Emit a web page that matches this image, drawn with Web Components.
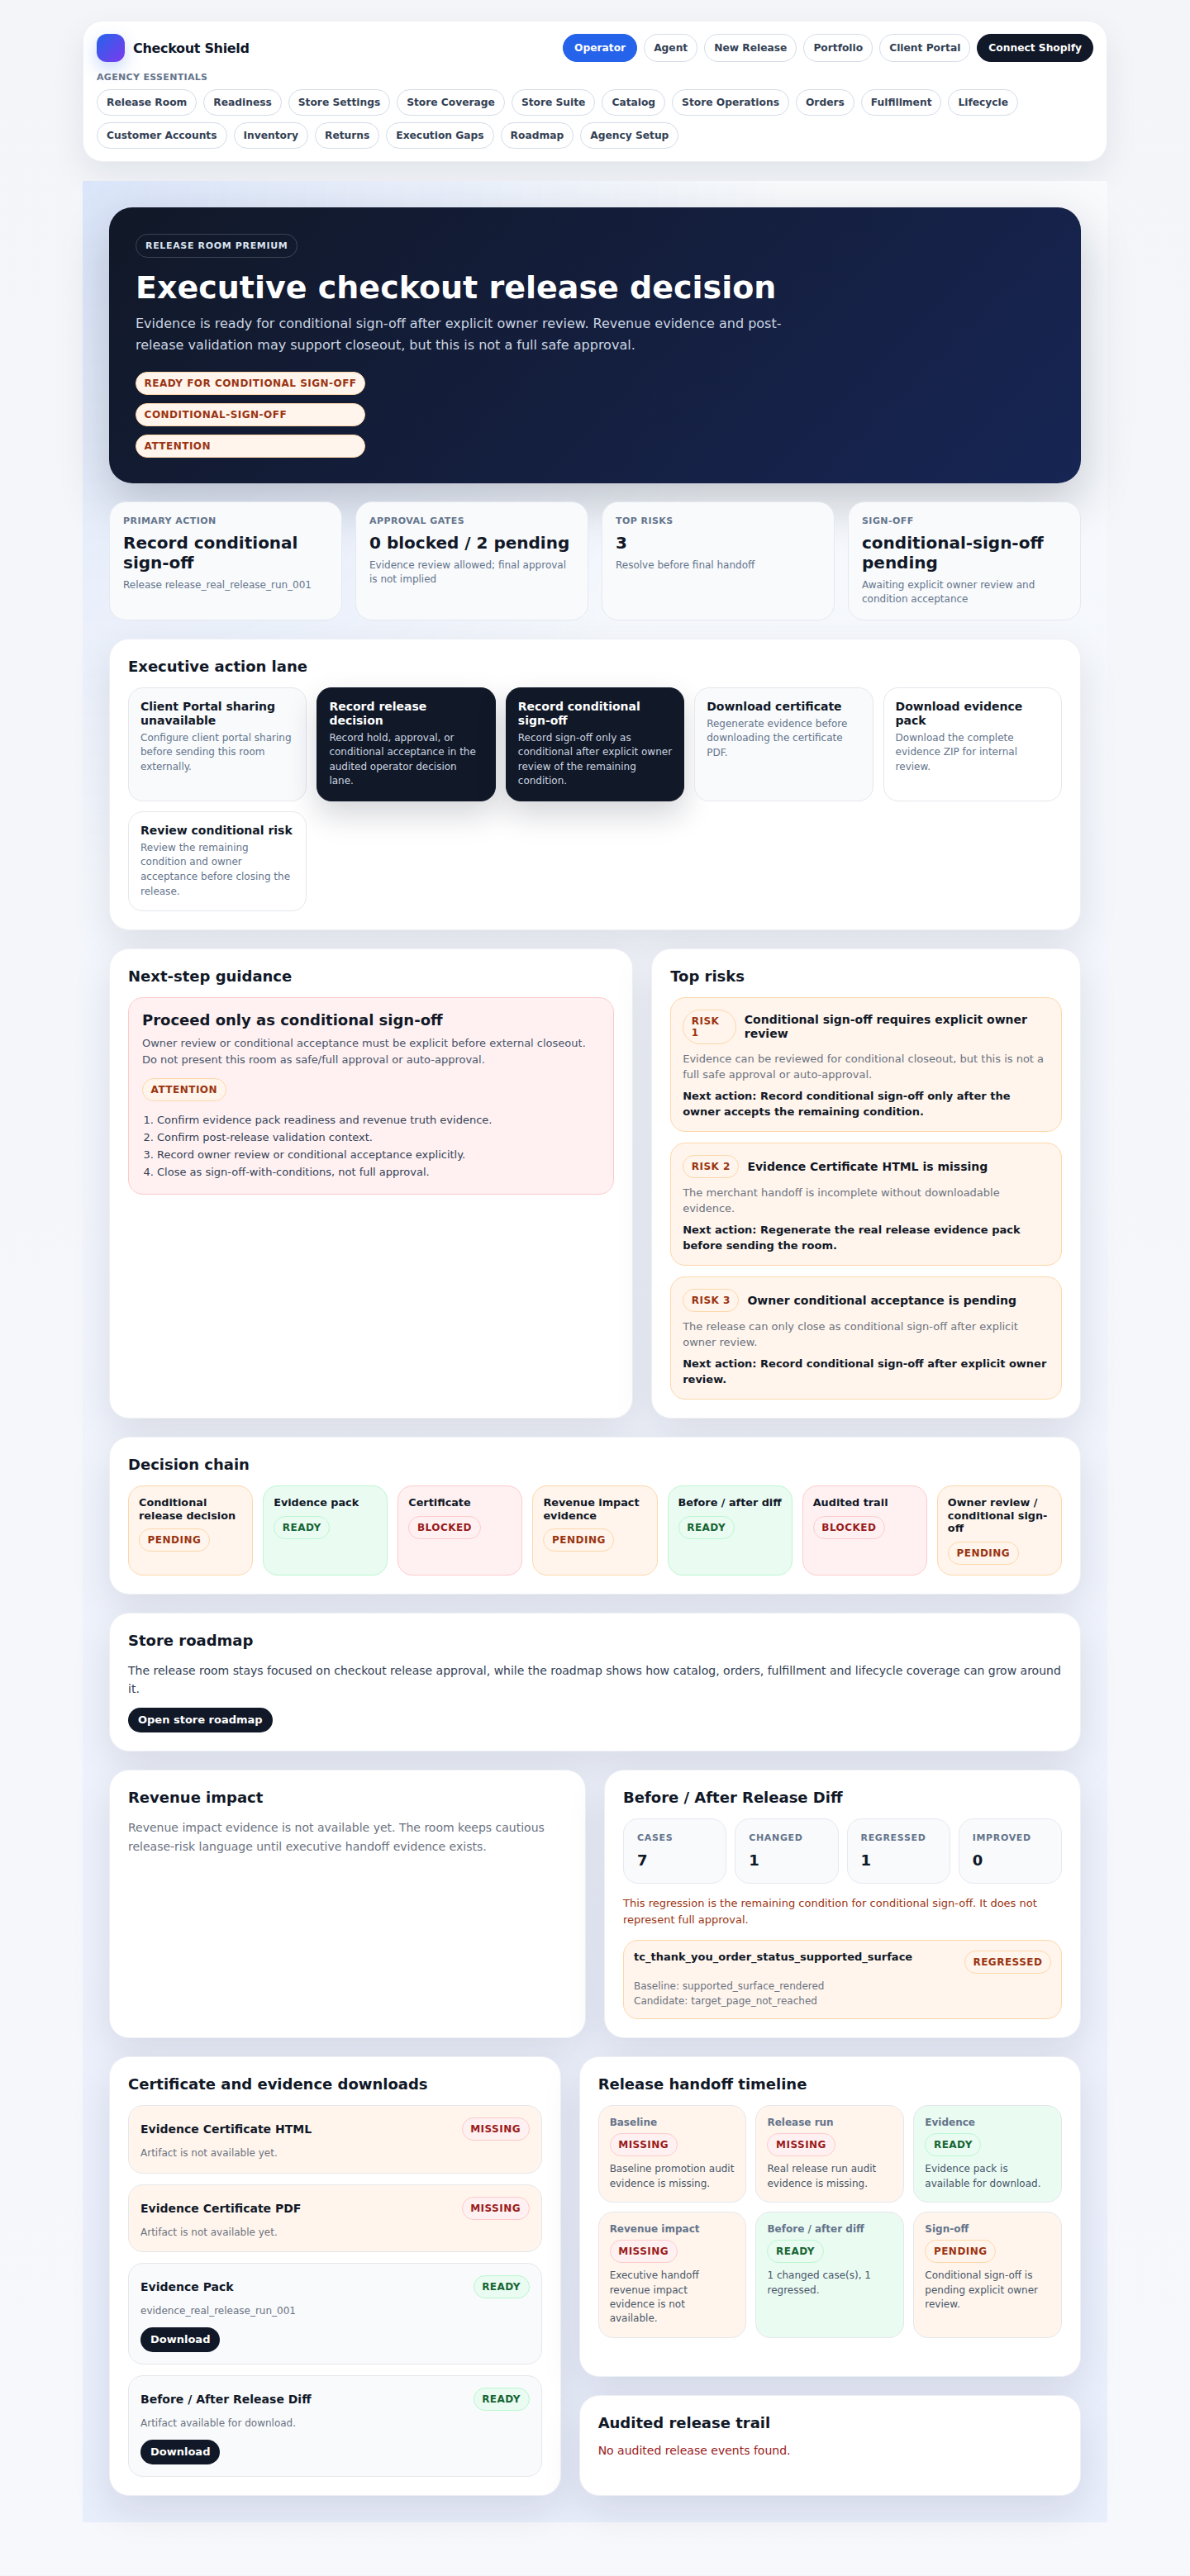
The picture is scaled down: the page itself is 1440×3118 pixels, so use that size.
<!DOCTYPE html>
<html lang="en">
<head>
<meta charset="utf-8">
<title>Checkout Shield</title>
<style>
  html, body { margin: 0; }
  body {
    background: linear-gradient(180deg, #f3f5f9 0%, #f6f8fc 100%);
    font-family: "DejaVu Sans", sans-serif;
    color: #111827;
  }
</style>
</head>
<body>
<app-page></app-page>

<script>
// shared bits of css for the elements that hold text
const baseCss = `
  * { box-sizing: border-box; }
  h1, h2, h3, p, ol { margin: 0; }
`;

const toneColors = {
  ready: { bg: "#eafbf2", line: "#bbf7d0", ink: "#166534" },
  blocked: { bg: "#fff1f2", line: "#fecaca", ink: "#991b1b" },
  missing: { bg: "#fff1f2", line: "#fecaca", ink: "#991b1b" },
  pending: { bg: "#fff5ec", line: "#fed7aa", ink: "#9a3412" },
};

function define(name, css, html) {
  customElements.define(
    name,
    class extends HTMLElement {
      constructor() {
        super();
        this.attachShadow({ mode: "open" });
        this.shadowRoot.innerHTML = `<style>${baseCss}${css}</style>${html}`;
      }
    }
  );
}

// status pill, the tone attribute picks the colours
class StatusBadge extends HTMLElement {
  constructor() {
    super();
    this.attachShadow({ mode: "open" });
  }

  connectedCallback() {
    const tone = toneColors[this.getAttribute("tone")] || toneColors.pending;
    this.shadowRoot.innerHTML = `
      <style>
        :host {
          display: block;
          width: fit-content;
          padding: 6px 9.6px;
          border-radius: 999px;
          border: 1px solid ${tone.line};
          background: ${tone.bg};
          color: ${tone.ink};
          font-size: 12px;
          line-height: 14px;
          font-weight: 700;
          letter-spacing: 0.04em;
          text-transform: uppercase;
        }
      </style>
      <slot></slot>
    `;
  }
}
customElements.define("status-badge", StatusBadge);

define("nav-pill", `
  :host { display: block; }
  a {
    display: block;
    padding: 0 11px;
    height: 32px;
    line-height: 30px;
    border: 1px solid #d5dce8;
    border-radius: 999px;
    background: #fff;
    color: #334155;
    font-size: 12.24px;
    font-weight: 700;
    white-space: nowrap;
  }
  :host([top]) a { height: 34px; line-height: 32px; }
  :host([active]) a { padding: 0 13px; background: #2563eb; border-color: #2563eb; color: #fff; }
  :host([dark]) a { padding: 0 13px; background: #111827; border-color: #111827; color: #fff; }
`, `<a><slot></slot></a>`);

define("top-nav", `
  :host {
    display: block;
    padding: 15px 16px;
    background: #fff;
    border: 1px solid #eef0f5;
    border-radius: 24px;
    box-shadow: 0 16px 40px rgba(15, 23, 42, 0.08);
  }
  .top { display: flex; justify-content: space-between; align-items: center; }
  .brand { display: flex; align-items: center; gap: 10px; font-size: 16px; font-weight: 700; letter-spacing: -0.02em; color: #0f172a; }
  .logo {
    width: 34px; height: 34px; border-radius: 12px;
    background: linear-gradient(135deg, #2563eb, #7c3aed);
    box-shadow: 0 8px 20px rgba(37, 99, 235, 0.25);
  }
  .links { display: flex; gap: 8px; }
  .label {
    margin-top: 12px; margin-bottom: 7px;
    font-size: 11px; line-height: 14px; font-weight: 700;
    letter-spacing: 0.03em; color: #64748b; text-transform: uppercase;
  }
  .essentials { display: flex; flex-wrap: wrap; gap: 8px; }
`, `
  <div class="top">
    <div class="brand"><span class="logo"></span>Checkout Shield</div>
    <div class="links">
      <nav-pill top active>Operator</nav-pill>
      <nav-pill top>Agent</nav-pill>
      <nav-pill top>New Release</nav-pill>
      <nav-pill top>Portfolio</nav-pill>
      <nav-pill top>Client Portal</nav-pill>
      <nav-pill top dark>Connect Shopify</nav-pill>
    </div>
  </div>
  <div class="label">Agency essentials</div>
  <div class="essentials">
    <nav-pill>Release Room</nav-pill>
    <nav-pill>Readiness</nav-pill>
    <nav-pill>Store Settings</nav-pill>
    <nav-pill>Store Coverage</nav-pill>
    <nav-pill>Store Suite</nav-pill>
    <nav-pill>Catalog</nav-pill>
    <nav-pill>Store Operations</nav-pill>
    <nav-pill>Orders</nav-pill>
    <nav-pill>Fulfillment</nav-pill>
    <nav-pill>Lifecycle</nav-pill>
    <nav-pill>Customer Accounts</nav-pill>
    <nav-pill>Inventory</nav-pill>
    <nav-pill>Returns</nav-pill>
    <nav-pill>Execution Gaps</nav-pill>
    <nav-pill>Roadmap</nav-pill>
    <nav-pill>Agency Setup</nav-pill>
  </div>
`);

define("hero-banner", `
  :host {
    display: block;
    padding: 32px 32px 31px;
    border-radius: 28px;
    background: linear-gradient(135deg, #111827 0%, #172554 100%);
    box-shadow: 0 24px 60px rgba(15, 23, 42, 0.22);
    color: #fff;
  }
  .tag {
    display: block;
    width: fit-content;
    padding: 7px 11px;
    height: 29px;
    border: 1px solid rgba(255, 255, 255, 0.18);
    border-radius: 999px;
    font-size: 11px; line-height: 14px; font-weight: 700;
    letter-spacing: 0.06em;
    color: #dbe4f0;
    text-transform: uppercase;
  }
  h1 { margin-top: 14px; font-size: 38px; line-height: 44px; font-weight: 700; }
  p { margin-top: 9px; max-width: 820px; font-size: 16px; line-height: 26px; color: #cbd5e1; }
  .chips { display: flex; flex-direction: column; width: fit-content; gap: 10px; margin-top: 19px; }
  .chip {
    height: 28px; padding: 0 9.6px;
    border: 1px solid #fed7aa; border-radius: 999px;
    background: #fff5ec; color: #9a3412;
    font-size: 12px; line-height: 26px; font-weight: 700; letter-spacing: 0.04em;
    text-transform: uppercase;
  }
`, `
  <span class="tag">Release room premium</span>
  <h1>Executive checkout release decision</h1>
  <p>Evidence is ready for conditional sign-off after explicit owner review. Revenue evidence and post-release validation may support closeout, but this is not a full safe approval.</p>
  <div class="chips">
    <div class="chip">Ready for conditional sign-off</div>
    <div class="chip">conditional-sign-off</div>
    <div class="chip">Attention</div>
  </div>
`);

class StatCard extends HTMLElement {
  constructor() {
    super();
    this.attachShadow({ mode: "open" });
  }
  connectedCallback() {
    this.shadowRoot.innerHTML = `
      <style>
        ${baseCss}
        :host {
          display: block;
          padding: 16px;
          border: 1px solid #e5e9f0;
          border-radius: 20px;
          background: #f8fafc;
        }
        .label { font-size: 11px; line-height: 14px; font-weight: 700; letter-spacing: 0.04em; color: #64748b; text-transform: uppercase; }
        .value { margin-top: 7px; font-size: 20px; line-height: 24px; font-weight: 700; color: #111827; }
        .note { margin-top: 7px; font-size: 12px; line-height: 17px; color: #64748b; }
      </style>
      <div class="label">${this.getAttribute("label")}</div>
      <div class="value">${this.getAttribute("value")}</div>
      <div class="note">${this.getAttribute("note")}</div>
    `;
  }
}
customElements.define("stat-card", StatCard);

define("panel-card", `
  :host {
    display: block;
    padding: 22px;
    border-radius: 24px;
    background: #fff;
    border: 1px solid #eef0f5;
    box-shadow: 0 18px 48px rgba(15, 23, 42, 0.1);
  }
  h2 { font-size: 18px; line-height: 21.6px; margin-bottom: 14.4px; font-weight: 700; color: #111827; }
`, `<h2><slot name="title"></slot></h2><slot></slot>`);

class ActionCard extends HTMLElement {
  constructor() {
    super();
    this.attachShadow({ mode: "open" });
  }
  connectedCallback() {
    const dark = this.hasAttribute("dark");
    const bg = dark ? "#111827" : this.hasAttribute("muted") ? "#f8fafc" : "#fff";
    this.shadowRoot.innerHTML = `
      <style>
        ${baseCss}
        :host {
          display: block;
          padding: 14px;
          border-radius: 18px;
          border: 1px solid ${dark ? "#111827" : "#e5e7eb"};
          background: ${bg};
          ${dark ? "box-shadow: 0 16px 36px rgba(15, 23, 42, 0.18);" : ""}
        }
        h3 { font-size: 14px; line-height: 16.8px; font-weight: 700; color: ${dark ? "#fff" : "#111827"}; }
        p { margin-top: 4px; font-size: 12px; line-height: 17.6px; color: ${dark ? "#cbd5e1" : "#64748b"}; }
      </style>
      <h3>${this.getAttribute("title")}</h3>
      <p><slot></slot></p>
    `;
  }
}
customElements.define("action-card", ActionCard);

define("action-lane", `
  :host { display: grid; grid-template-columns: repeat(5, 1fr); gap: 12px; }
`, `<slot></slot>`);

define("guidance-box", `
  :host {
    display: block;
    padding: 16px;
    border: 1px solid #fecaca;
    border-radius: 18px;
    background: #fff1f2;
  }
  h3 { font-size: 18px; line-height: 22px; font-weight: 700; color: #111827; }
  p { margin-top: 7px; font-size: 13px; line-height: 20px; color: #475569; }
  status-badge { margin-top: 12px; }
  ol { margin-top: 13px; padding-left: 18px; font-size: 13px; line-height: 20.8px; color: #334155; }
`, `
  <h3>Proceed only as conditional sign-off</h3>
  <p>Owner review or conditional acceptance must be explicit before external closeout. Do not present this room as safe/full approval or auto-approval.</p>
  <status-badge tone="pending">Attention</status-badge>
  <ol>
    <li>Confirm evidence pack readiness and revenue truth evidence.</li>
    <li>Confirm post-release validation context.</li>
    <li>Record owner review or conditional acceptance explicitly.</li>
    <li>Close as sign-off-with-conditions, not full approval.</li>
  </ol>
`);

class RiskCard extends HTMLElement {
  constructor() {
    super();
    this.attachShadow({ mode: "open" });
  }
  connectedCallback() {
    this.shadowRoot.innerHTML = `
      <style>
        ${baseCss}
        :host {
          display: block;
          padding: 14px;
          border: 1px solid #fed7aa;
          border-radius: 18px;
          background: #fff5ec;
        }
        .head { display: flex; align-items: center; gap: 10px; }
        h3 { font-size: 14px; line-height: 16.8px; font-weight: 700; color: #111827; }
        p { margin-top: 8px; font-size: 13px; line-height: 19px; color: #6b7280; }
        p.next { margin-top: 7px; font-weight: 700; color: #111827; }
      </style>
      <div class="head">
        <status-badge tone="pending">${this.getAttribute("risk")}</status-badge>
        <h3>${this.getAttribute("title")}</h3>
      </div>
      <p>${this.getAttribute("body")}</p>
      <p class="next">Next action: ${this.getAttribute("next")}</p>
    `;
  }
}
customElements.define("risk-card", RiskCard);

class ChainStep extends HTMLElement {
  constructor() {
    super();
    this.attachShadow({ mode: "open" });
  }
  connectedCallback() {
    const key = this.getAttribute("tone");
    const tone = toneColors[key];
    this.shadowRoot.innerHTML = `
      <style>
        ${baseCss}
        :host {
          display: block;
          padding: 12px;
          border: 1px solid ${tone.line};
          border-radius: 18px;
          background: ${tone.bg};
        }
        .name { font-size: 12.8px; line-height: 15.6px; font-weight: 700; color: #111827; margin-bottom: 8px; }
      </style>
      <div class="name">${this.getAttribute("name")}</div>
      <status-badge tone="${key}">${key}</status-badge>
    `;
  }
}
customElements.define("chain-step", ChainStep);

define("dark-button", `
  :host {
    display: block;
    width: fit-content;
    padding: 0 12px;
    height: 30.5px;
    line-height: 30.5px;
    border-radius: 999px;
    background: #111827;
    color: #fff;
    font-size: 13px;
    font-weight: 700;
  }
`, `<slot></slot>`);

class DiffStat extends HTMLElement {
  constructor() {
    super();
    this.attachShadow({ mode: "open" });
  }
  connectedCallback() {
    this.shadowRoot.innerHTML = `
      <style>
        ${baseCss}
        :host {
          display: block;
          height: 79px;
          padding: 16px;
          border: 1px solid #e5e9f0;
          border-radius: 18px;
          background: #f8fafc;
        }
        .label { font-size: 11px; line-height: 14px; font-weight: 700; color: #64748b; letter-spacing: 0.06em; text-transform: uppercase; }
        .value { margin-top: 8px; font-size: 18px; line-height: 24px; font-weight: 700; color: #111827; }
      </style>
      <div class="label">${this.getAttribute("label")}</div>
      <div class="value">${this.getAttribute("value")}</div>
    `;
  }
}
customElements.define("diff-stat", DiffStat);

class DownloadCard extends HTMLElement {
  constructor() {
    super();
    this.attachShadow({ mode: "open" });
  }
  connectedCallback() {
    const tone = this.getAttribute("tone");
    const ready = tone === "ready";
    this.shadowRoot.innerHTML = `
      <style>
        ${baseCss}
        :host {
          display: block;
          padding: 14px;
          border: 1px solid #e5e7eb;
          border-radius: 18px;
          background: ${ready ? "#f8fafc" : "#fff5ec"};
        }
        .head { display: flex; justify-content: space-between; align-items: center; }
        h3 { font-size: 14px; font-weight: 700; color: #111827; }
        p { margin-top: 6px; font-size: 12px; line-height: 18.5px; color: #6b7280; }
        dark-button { margin-top: 10px; }
      </style>
      <div class="head">
        <h3>${this.getAttribute("title")}</h3>
        <status-badge tone="${tone}">${tone}</status-badge>
      </div>
      <p>${this.getAttribute("note")}</p>
      ${ready ? "<dark-button>Download</dark-button>" : ""}
    `;
  }
}
customElements.define("download-card", DownloadCard);

class TimelineStep extends HTMLElement {
  constructor() {
    super();
    this.attachShadow({ mode: "open" });
  }
  connectedCallback() {
    const tone = this.getAttribute("tone");
    const bg = tone === "ready" ? "#eafbf2" : "#fff5ec";
    this.shadowRoot.innerHTML = `
      <style>
        ${baseCss}
        :host {
          display: block;
          padding: 13px;
          border: 1px solid #e5e7eb;
          border-radius: 18px;
          background: ${bg};
        }
        .name { font-size: 12px; line-height: 14px; font-weight: 700; color: #64748b; margin-bottom: 6px; }
        p { margin-top: 7px; font-size: 12px; line-height: 17.4px; color: #475569; }
      </style>
      <div class="name">${this.getAttribute("name")}</div>
      <status-badge tone="${tone}">${tone}</status-badge>
      <p><slot></slot></p>
    `;
  }
}
customElements.define("timeline-step", TimelineStep);

define("app-page", `
  :host { display: block; width: 1240px; margin: 0 auto; padding: 25px 0 64px; }
  .shell {
    margin-top: 23px;
    padding: 32px;
    display: flex; flex-direction: column; gap: 22px;
    background:
      radial-gradient(circle 850px at top left, rgba(37, 99, 235, 0.14), rgba(37, 99, 235, 0) 100%),
      linear-gradient(180deg, #f8fafc 0%, #e9eefc 100%);
  }
  .four { display: grid; grid-template-columns: repeat(4, 1fr); gap: 16px; }
  .split { display: grid; gap: 22px; }
  .guidance { grid-template-columns: 1.22fr 1fr; }
  .even { grid-template-columns: 1fr 1fr; }
  .handoff { grid-template-columns: 0.9fr 1fr; }
  .stack { display: grid; gap: 13px; }
  .chain { display: grid; grid-template-columns: repeat(7, 1fr); gap: 12px; }
  .copy { font-size: 14px; line-height: 22.4px; color: #334155; }
  .muted { font-size: 14px; line-height: 22.4px; color: #6b7280; }
  .copy + dark-button { margin-top: 11px; }
  .stats { display: grid; grid-template-columns: repeat(4, 1fr); gap: 10px; }
  .warn { margin-top: 14px; font-size: 13px; line-height: 20px; color: #9a3412; }
  .case {
    margin-top: 14px;
    padding: 12px;
    border: 1px solid #fed7aa;
    border-radius: 18px;
    background: #fff5ec;
  }
  .case .head { display: flex; justify-content: space-between; align-items: flex-start; }
  .case b { font-size: 13px; line-height: 15px; color: #111827; }
  .case p { margin: 6px 0 0; font-size: 12px; line-height: 18px; color: #6b7280; }
  .right { display: grid; gap: 22px; }
  .timeline { display: grid; grid-template-columns: repeat(3, 1fr); gap: 11.2px; }
  .none { font-size: 14px; color: #991b1b; }
`, `
  <top-nav></top-nav>
  <main class="shell">
    <hero-banner></hero-banner>
    <div class="four">
      <stat-card label="Primary action" value="Record conditional sign-off" note="Release release_real_release_run_001"></stat-card>
      <stat-card label="Approval gates" value="0 blocked / 2 pending" note="Evidence review allowed; final approval is not implied"></stat-card>
      <stat-card label="Top risks" value="3" note="Resolve before final handoff"></stat-card>
      <stat-card label="Sign-off" value="conditional-sign-off pending" note="Awaiting explicit owner review and condition acceptance"></stat-card>
    </div>
    <panel-card>
      <span slot="title">Executive action lane</span>
      <action-lane>
        <action-card muted title="Client Portal sharing unavailable">Configure client portal sharing before sending this room externally.</action-card>
        <action-card dark title="Record release decision">Record hold, approval, or conditional acceptance in the audited operator decision lane.</action-card>
        <action-card dark title="Record conditional sign-off">Record sign-off only as conditional after explicit owner review of the remaining condition.</action-card>
        <action-card muted title="Download certificate">Regenerate evidence before downloading the certificate PDF.</action-card>
        <action-card title="Download evidence pack">Download the complete evidence ZIP for internal review.</action-card>
        <action-card title="Review conditional risk">Review the remaining condition and owner acceptance before closing the release.</action-card>
      </action-lane>
    </panel-card>
    <div class="split guidance">
      <panel-card>
        <span slot="title">Next-step guidance</span>
        <guidance-box></guidance-box>
      </panel-card>
      <panel-card>
        <span slot="title">Top risks</span>
        <div class="stack">
          <risk-card risk="Risk 1" title="Conditional sign-off requires explicit owner review" body="Evidence can be reviewed for conditional closeout, but this is not a full safe approval or auto-approval." next="Record conditional sign-off only after the owner accepts the remaining condition."></risk-card>
          <risk-card risk="Risk 2" title="Evidence Certificate HTML is missing" body="The merchant handoff is incomplete without downloadable evidence." next="Regenerate the real release evidence pack before sending the room."></risk-card>
          <risk-card risk="Risk 3" title="Owner conditional acceptance is pending" body="The release can only close as conditional sign-off after explicit owner review." next="Record conditional sign-off after explicit owner review."></risk-card>
        </div>
      </panel-card>
    </div>
    <panel-card>
      <span slot="title">Decision chain</span>
      <div class="chain">
        <chain-step tone="pending" name="Conditional release decision"></chain-step>
        <chain-step tone="ready" name="Evidence pack"></chain-step>
        <chain-step tone="blocked" name="Certificate"></chain-step>
        <chain-step tone="pending" name="Revenue impact evidence"></chain-step>
        <chain-step tone="ready" name="Before / after diff"></chain-step>
        <chain-step tone="blocked" name="Audited trail"></chain-step>
        <chain-step tone="pending" name="Owner review / conditional sign-off"></chain-step>
      </div>
    </panel-card>
    <panel-card>
      <span slot="title">Store roadmap</span>
      <div class="copy">The release room stays focused on checkout release approval, while the roadmap shows how catalog, orders, fulfillment and lifecycle coverage can grow around it.</div>
      <dark-button>Open store roadmap</dark-button>
    </panel-card>
    <div class="split even">
      <panel-card>
        <span slot="title">Revenue impact</span>
        <div class="muted">Revenue impact evidence is not available yet. The room keeps cautious release-risk language until executive handoff evidence exists.</div>
      </panel-card>
      <panel-card>
        <span slot="title">Before / After Release Diff</span>
        <div class="stats">
          <diff-stat label="Cases" value="7"></diff-stat>
          <diff-stat label="Changed" value="1"></diff-stat>
          <diff-stat label="Regressed" value="1"></diff-stat>
          <diff-stat label="Improved" value="0"></diff-stat>
        </div>
        <div class="warn">This regression is the remaining condition for conditional sign-off. It does not represent full approval.</div>
        <div class="case">
          <div class="head">
            <b>tc_thank_you_order_status_supported_surface</b>
            <status-badge tone="pending">Regressed</status-badge>
          </div>
          <p>Baseline: supported_surface_rendered<br>Candidate: target_page_not_reached</p>
        </div>
      </panel-card>
    </div>
    <div class="split handoff">
      <panel-card>
        <span slot="title">Certificate and evidence downloads</span>
        <div class="stack">
          <download-card tone="missing" title="Evidence Certificate HTML" note="Artifact is not available yet."></download-card>
          <download-card tone="missing" title="Evidence Certificate PDF" note="Artifact is not available yet."></download-card>
          <download-card tone="ready" title="Evidence Pack" note="evidence_real_release_run_001"></download-card>
          <download-card tone="ready" title="Before / After Release Diff" note="Artifact available for download."></download-card>
        </div>
      </panel-card>
      <div class="right">
        <panel-card>
          <span slot="title">Release handoff timeline</span>
          <div class="timeline">
            <timeline-step tone="missing" name="Baseline">Baseline promotion audit evidence is missing.</timeline-step>
            <timeline-step tone="missing" name="Release run">Real release run audit evidence is missing.</timeline-step>
            <timeline-step tone="ready" name="Evidence">Evidence pack is available for download.</timeline-step>
            <timeline-step tone="missing" name="Revenue impact">Executive handoff revenue impact evidence is not available.</timeline-step>
            <timeline-step tone="ready" name="Before / after diff">1 changed case(s), 1 regressed.</timeline-step>
            <timeline-step tone="pending" name="Sign-off">Conditional sign-off is pending explicit owner review.</timeline-step>
          </div>
        </panel-card>
        <panel-card>
          <span slot="title">Audited release trail</span>
          <div class="none">No audited release events found.</div>
        </panel-card>
      </div>
    </div>
  </main>
`);
</script>
</body>
</html>
